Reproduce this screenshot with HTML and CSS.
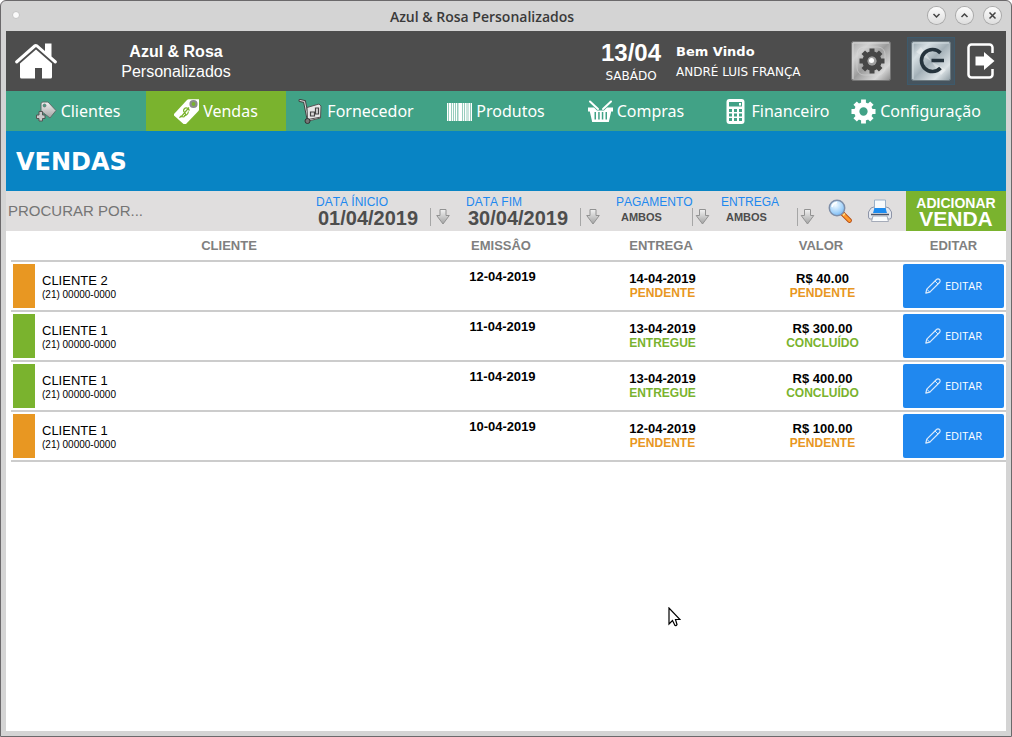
FILE: index.html
```html
<!DOCTYPE html>
<html lang="pt-BR">
<head>
<meta charset="utf-8">
<title>Azul &amp; Rosa Personalizados</title>
<link rel="stylesheet" href="styles.css">
</head>
<body>
<svg class="defs" aria-hidden="true">
  <defs>
    <linearGradient id="silver" x1="0" y1="0" x2="0" y2="1"><stop offset="0" stop-color="#f2f2f2"/><stop offset="1" stop-color="#a2a2a2"/></linearGradient>
    <linearGradient id="metal" x1="0" y1="0" x2="1" y2="1"><stop offset="0" stop-color="#a8a8a8"/><stop offset=".25" stop-color="#d2d2d2"/><stop offset=".5" stop-color="#9c9c9c"/><stop offset=".78" stop-color="#d8d8d8"/><stop offset="1" stop-color="#8a8a8a"/></linearGradient>
    <linearGradient id="steel" x1="0" y1="0" x2="1" y2="1"><stop offset="0" stop-color="#8fa0a8"/><stop offset=".25" stop-color="#d6dfe3"/><stop offset=".5" stop-color="#a3b0b7"/><stop offset=".78" stop-color="#dce3e6"/><stop offset="1" stop-color="#8d9ba2"/></linearGradient>
    <radialGradient id="glass" cx=".4" cy=".3" r=".8"><stop offset="0" stop-color="#f4fbff"/><stop offset=".6" stop-color="#a5d3fa"/><stop offset="1" stop-color="#68aef0"/></radialGradient>
    <symbol id="down" viewBox="0 0 14 16"><path d="M4 .5h6v6h3.300L7 15 .7 6.500H4z" fill="url(#silver)" stroke="#929292"/></symbol>
    <symbol id="gear" viewBox="-13 -13 26 26"><g fill="none" stroke="currentColor"><circle r="7" stroke-width="5.400"/><path stroke-width="5" stroke-linecap="butt" d="M0-8v-4.500M0 8v4.500M-8 0h-4.500M8 0h4.500M5.700 5.700l3 3M-5.700-5.700l-3-3M5.700-5.700l3-3M-5.700 5.700l-3 3"/></g></symbol>
    <symbol id="pencil" viewBox="0 0 16 16"><g fill="none" stroke="#d9e9fb" stroke-linejoin="round"><path stroke-width="1.200" d="M.8 15.200l1-4L11.500 1.500a1.800 1.800 0 0 1 3 3L4.800 14.200z"/><path d="M10 3l3 3M1.800 11.200l3 3"/></g></symbol>
  </defs>
</svg>
<div class="window">
  <div class="titlebar">
    <span class="dot"></span>
    <span class="caption">Azul &amp; Rosa Personalizados</span>
    <div class="controls">
      <button type="button" aria-label="Minimizar"><svg viewBox="0 0 17 17"><path d="M5.500 7l3 3 3-3"/></svg></button>
      <button type="button" aria-label="Maximizar"><svg viewBox="0 0 17 17"><path d="M5.500 10l3-3 3 3"/></svg></button>
      <button type="button" aria-label="Fechar"><svg viewBox="0 0 17 17"><path d="M5.500 5.500l6 6M11.500 5.500l-6 6"/></svg></button>
    </div>
  </div>
  <div class="app">
    <header class="header">
      <button type="button" class="plain" aria-label="Início">
        <svg width="44" height="38" viewBox="0 0 44 38" fill="#fff"><path d="M6 21.500L22 7.500l16 14V35a1.500 1.500 0 0 1-1.500 1.500H28V26h-7v10.500H7.500A1.500 1.500 0 0 1 6 35z"/><path d="M23.500 2.500L31 9V1.500h6.500v13l5.200 4.600c.8 1.500-.8 3-2.200 2.100L22 5 3.500 21.200c-1.500.9-3-.7-2.200-2.100L20 2.500q1.800-1.200 3.500 0z"/></svg>
      </button>
      <div class="brand"><strong>Azul &amp; Rosa</strong><span>Personalizados</span></div>
      <div class="today"><strong>13/04</strong><span>SABÁDO</span></div>
      <div class="user"><strong>Bem Vindo</strong><span>ANDRÉ LUIS FRANÇA</span></div>
      <button type="button" class="plain" aria-label="Ajustes">
        <svg width="40" height="40" viewBox="0 0 40 40"><rect x=".5" y=".5" width="39" height="39" rx="2" fill="url(#metal)" stroke="#747474"/><path d="M2 38V2h36" fill="none" stroke="#d6d6d6"/><rect x="6" y="6" width="28" height="28" rx="7" fill="none" stroke="#ddd" opacity=".5"/><use href="#gear" x="8" y="7" width="26" height="26" color="#474747"/><circle cx="21" cy="20" r="4.500" fill="#a0a0a0"/><circle cx="20.500" cy="19.500" r="2.500" fill="#fff"/></svg>
      </button>
      <button type="button" class="plain power" aria-label="Trocar usuário">
        <svg width="40" height="40" viewBox="0 0 40 40"><rect x=".5" y=".5" width="39" height="39" rx="2" fill="url(#steel)" stroke="#6d7a80"/><path d="M2 38V2h36" fill="none" stroke="#d4dee2"/><path d="M20 20L5 11l5-5zM20 20l15 9-5 5z" fill="#fff" opacity=".35"/><path d="M29.500 12a11 11 0 1 0 0 15M20.500 19.500H33" fill="none" stroke="#25333c" stroke-width="3.600"/></svg>
      </button>
      <button type="button" class="plain" aria-label="Sair">
        <svg width="28" height="36" viewBox="0 0 28 36"><path d="M25.500 10V4.500a3 3 0 0 0-3-3h-18a3 3 0 0 0-3 3v27a3 3 0 0 0 3 3h18a3 3 0 0 0 3-3V26" fill="none" stroke="#fff" stroke-width="2.500"/><path d="M8.500 13.500H17V9l10.500 9L17 27v-4.500H8.500z" fill="#fff"/></svg>
      </button>
    </header>
    <nav class="menu">
      <a href="#clientes"><svg viewBox="0 0 25 25"><path d="M9 5q0-2 2-2h5l8 8.500-6 7.500L9 12z" fill="url(#silver)" stroke="#5d6f6a"/><circle cx="12.500" cy="6.500" r="1.500" fill="#41a286" stroke="#666" stroke-width=".7"/><path d="M7 12.500h3.500V16H13v3.500h-2.500V22H7v-2.500H4.500V16H7z" fill="#c9c9c9" stroke="#555"/></svg>Clientes</a>
      <a href="#vendas" class="active" aria-current="page"><svg viewBox="0 0 25 25"><path d="M0 15L13 1q.7-.7 1.700-.7H25v10q0 1-.6 1.700L12 25H9.500L0 16.500z" fill="#fff"/><circle cx="19.500" cy="5" r="3" fill="#7ab32e" stroke="#8c8c8c" stroke-width="2.200"/><path d="M14 9.500c-3-2-6 2-3.500 4s0 6-3.500 3.500M15.500 11.500L13.800 9.500M7 17l-1.500 1.800M15 8.500l-8 9.500M14.500 12.500c-.6 3-3 4.500-4.500 4" fill="none" stroke="#7ab32e" stroke-width="1.200"/></svg>Vendas</a>
      <a href="#fornecedor"><svg viewBox="0 0 25 25"><path d="M2 1.500l4.500 1L10 20" fill="none" stroke="#454545" stroke-width="3" stroke-linecap="round"/><path d="M2 1.500l4.500 1L10 20" fill="none" stroke="#ddd" stroke-linecap="round"/><path d="M9 8.500L21 5l2 2-.5 12-12 3-1-2z" fill="#e8e8e8" stroke="#555"/><path d="M12.500 13h4v4h-4zM17.500 9h3v6h-3z" fill="#d8d8d8" stroke="#444" stroke-width="1.200"/><path d="M10 20.500l13-2.500" stroke="#555"/><circle cx="9.500" cy="22" r="2.500" fill="#777" stroke="#333"/></svg>Fornecedor</a>
      <a href="#produtos"><svg viewBox="0 0 25 25" fill="#fff"><path d="M0 4h1v18H0zM2 4h2v18H2zM5 4h1v18H5zM7 4h1v18H7zM9 4h1v18H9zM11.500 4h3.500v18h-3.500zM16 4h1v18h-1zM18 4h1.500v18H18zM20.500 4h1v18h-1zM22 4h1v18h-1zM24 4h1v18h-1z"/><path opacity=".45" d="M0 4h25v18H0z"/></svg>Produtos</a>
      <a href="#compras"><svg viewBox="0 0 25 25"><path d="M2 2.500l8 7.500M23 2.500L15 10" stroke="#fff" stroke-width="2" stroke-linecap="round"/><path fill="#fff" fill-rule="evenodd" d="M0 8.500h6l3 3h7l3-3h6v4h-1.800l-2.400 10.500H4.200L1.800 12.500H0zM6.500 13v7.500H8V13zM10.200 13v7.500h1.500V13zM13.800 13v7.500h1.500V13zM17.500 13v7.500H19V13z"/></svg>Compras</a>
      <a href="#financeiro"><svg viewBox="0 0 25 25"><rect x="3.500" width="18" height="25" rx="3" fill="#fff"/><path d="M6 3h13v4.500H6zM6 10h3v3H6zM11 10h3v3h-3zM16 10h3v3h-3zM6 14.500h3v3H6zM11 14.500h3v3h-3zM16 14.500h3v3h-3zM6 19h3v3H6zM11 19h3v3h-3zM16 19h3v3h-3z" fill="#41a286"/><path d="M16 4h2v2.500h-2z" fill="#fff"/></svg>Financeiro</a>
      <a href="#configuracao"><svg><use href="#gear"/></svg>Configuração</a>
    </nav>
    <h1 class="heading">VENDAS</h1>
    <form class="filters">
      <input class="search" type="text" placeholder="PROCURAR POR..." aria-label="Procurar por">
      <div class="field date"><label for="inicio">DATA ÍNICIO</label><input id="inicio" type="text" value="01/04/2019"><svg class="arrow"><use href="#down"/></svg></div>
      <div class="field date"><label for="fim">DATA FIM</label><input id="fim" type="text" value="30/04/2019"><svg class="arrow"><use href="#down"/></svg></div>
      <div class="field choice"><label for="pagamento">PAGAMENTO</label><select id="pagamento"><option>AMBOS</option></select><svg class="arrow"><use href="#down"/></svg></div>
      <div class="field choice"><label for="entrega">ENTREGA</label><select id="entrega"><option>AMBOS</option></select><svg class="arrow"><use href="#down"/></svg></div>
      <button type="button" class="plain tool" aria-label="Pesquisar"><svg width="24" height="24" viewBox="0 0 24 24"><path d="M14.500 14.500l7 7" stroke="#b4480f" stroke-width="4.600" stroke-linecap="round"/><path d="M15.500 15.500l6 6" stroke="#ff9a2e" stroke-width="3" stroke-linecap="round"/><path d="M15 16.500l2-2" stroke="#ffe08a" stroke-width="1.500"/><circle cx="9" cy="9" r="7.700" fill="url(#glass)" stroke="#7e8ea8" stroke-width="1.500"/><path d="M4 8q1-4 5-4.500" fill="none" stroke="#fff" stroke-width="1.500"/></svg></button>
      <button type="button" class="plain tool" aria-label="Imprimir"><svg width="24" height="24" viewBox="0 0 24 24"><path d="M3 9l3-1h12l3 1 2.500 4v5q0 2-2 2h-19q-2 0-2-2v-5z" fill="#e4e7ee" stroke="#8e95a8"/><path d="M6.500 1h11v10h-11z" fill="#f8fafc" stroke="#9ab0c8"/><path d="M6.500 9h11l1.500 5H5z" fill="#1d8cf0"/><path d="M3 15.500h18" stroke="#4c5365" stroke-width="1.500"/><path d="M5 17h14l1.500 5.500h-17z" fill="#fafbfc" stroke="#a5abb8"/></svg></button>
      <button type="button" class="add"><span>ADICIONAR</span><strong>VENDA</strong></button>
    </form>
    <main>
      <table class="sales">
        <thead><tr><th class="client">CLIENTE</th><th>EMISSÂO</th><th>ENTREGA</th><th>VALOR</th><th class="actions">EDITAR</th></tr></thead>
        <tbody>
          <tr class="pending"><td class="client"><div><b>CLIENTE 2</b><small>(21) 00000-0000</small></div></td><td class="info issued">12-04-2019</td><td class="info">14-04-2019<em>PENDENTE</em></td><td class="info">R$ 40.00<em>PENDENTE</em></td><td class="actions"><button type="button"><svg><use href="#pencil"/></svg>EDITAR</button></td></tr>
          <tr class="done"><td class="client"><div><b>CLIENTE 1</b><small>(21) 00000-0000</small></div></td><td class="info issued">11-04-2019</td><td class="info">13-04-2019<em>ENTREGUE</em></td><td class="info">R$ 300.00<em>CONCLUÍDO</em></td><td class="actions"><button type="button"><svg><use href="#pencil"/></svg>EDITAR</button></td></tr>
          <tr class="done"><td class="client"><div><b>CLIENTE 1</b><small>(21) 00000-0000</small></div></td><td class="info issued">11-04-2019</td><td class="info">13-04-2019<em>ENTREGUE</em></td><td class="info">R$ 400.00<em>CONCLUÍDO</em></td><td class="actions"><button type="button"><svg><use href="#pencil"/></svg>EDITAR</button></td></tr>
          <tr class="pending"><td class="client"><div><b>CLIENTE 1</b><small>(21) 00000-0000</small></div></td><td class="info issued">10-04-2019</td><td class="info">12-04-2019<em>PENDENTE</em></td><td class="info">R$ 100.00<em>PENDENTE</em></td><td class="actions"><button type="button"><svg><use href="#pencil"/></svg>EDITAR</button></td></tr>
        </tbody>
      </table>
    </main>
  </div>
  <svg class="cursor" viewBox="0 0 13 20" aria-hidden="true"><path d="M1 1v16l3.500-3.500L7 18.500q1.500.5 2-1L7.500 12.500H12z" fill="#fff" stroke="#000" stroke-width="1.200"/></svg>
</div>
</body>
</html>
```
FILE: styles.css
```css
* { box-sizing: border-box; }

body {
  margin: 0;
  background: #fff;
  font-family: "Liberation Sans", Arial, sans-serif;
}

button, input, select { font: inherit; color: inherit; border: 0; padding: 0; margin: 0; background: none; }
svg { display: block; flex: none; }
.defs { position: absolute; width: 0; height: 0; }

.window {
  position: relative;
  display: flex;
  flex-direction: column;
  min-height: 100vh;
  padding: 0 5px 5px;
  border: 1px solid #6b696b;
  border-radius: 6px 6px 0 0;
  background: #d4d4d4;
}

.titlebar {
  display: grid;
  grid-template-columns: 80px 1fr 128px;
  align-items: center;
  height: 30px;
  padding-bottom: 2px;
}
.dot { width: 8px; height: 8px; margin-left: 6px; border-radius: 50%; background: #fafafa; border: 1px solid #c4c4c4; }
.caption { padding-top: 4px; text-align: center; font: 600 14px/20px "Open Sans", sans-serif; color: #3a3a3a; }
.controls { display: flex; justify-content: flex-end; gap: 11px; padding-right: 5px; }
.controls button { width: 17px; height: 17px; border-radius: 50%; background: linear-gradient(#fcfcfc, #dedede); box-shadow: 0 0 0 1px #a9a9a9; }
.controls path { fill: none; stroke: #444; stroke-width: 1.5; }

.app { flex: 1; background: #fff; }

.header {
  display: grid;
  grid-template-columns: 60px 220px 1fr 80px 170px 60px 60px 40px;
  align-items: center;
  height: 60px;
  padding-right: 5px;
  background: #4d4d4d;
  color: #fff;
}
.plain { display: grid; place-items: center; }
.brand, .today, .user { display: flex; flex-direction: column; }
.brand { padding-top: 2px; text-align: center; font-size: 16px; line-height: 20px; }
.today { grid-column: 4; padding-top: 2px; text-align: center; font: 12px/18px "DejaVu Sans", sans-serif; }
.today strong { font: bold 24px/28px "Liberation Sans", sans-serif; }
.user { padding: 2px 0 0 5px; font: 12px/20px "DejaVu Sans", sans-serif; }
.user strong { font-size: 13px; }
.power { width: 48px; height: 48px; justify-self: center; background: #46545e; border: 1px solid #3d5a6c; }

.menu { display: flex; background: #41a286; }
.menu a {
  display: flex;
  align-items: center;
  justify-content: center;
  gap: 4px;
  width: 14%;
  height: 40px;
  color: #fff;
  font: 16px/24px "Noto Sans", sans-serif;
  text-decoration: none;
}
.menu svg { width: 25px; height: 25px; }
.menu .active { background: #7ab32e; }

.heading {
  margin: 0;
  padding: 2px 10px 0;
  background: #0884c4;
  color: #fff;
  font: bold 24px/58px "DejaVu Sans", sans-serif;
}

.filters {
  display: grid;
  grid-template-columns: 1fr 150px 150px 105px 105px 40px 40px 100px;
  height: 40px;
  background: #e0dede;
}
.search { min-width: 0; padding: 0 2px 2px; font-size: 15px; }
.search::placeholder { color: #757575; opacity: 1; }
.field {
  display: grid;
  grid-template-rows: 12px 20px;
  align-content: start;
  padding-top: 5px;
  color: #4d4d4d;
}
.field label { grid-column: 1 / 3; color: #2088ef; font-size: 12px; line-height: 12px; font-kerning: none; }
.field select { appearance: none; min-width: 0; height: 18px; padding-left: 5px; font-size: 11px; font-weight: bold; }
.date input { min-width: 0; height: 20px; padding-left: 2px; font-size: 20px; font-weight: bold; }
.date { grid-template-columns: 1fr 36px; }
.choice { grid-template-columns: 1fr 29px; }
.arrow { width: 20px; height: 18px; padding: 1px 0 1px 5px; border-left: 1px solid #a6a6a6; }
.choice .arrow { width: 18px; padding-left: 2px; }
.tool { justify-items: start; padding-left: 2px; }
.add { background: #7ab32e; color: #fff; display: flex; flex-direction: column; align-items: center; justify-content: center; }
.add span { font-size: 14px; font-weight: bold; line-height: 15px; }
.add strong { font-size: 21px; line-height: 15px; }

main { padding-left: 5px; }
.sales { width: 100%; table-layout: fixed; border-collapse: separate; border-spacing: 0; text-align: center; font-size: 13px; font-weight: bold; line-height: 15px; }
.sales th, .sales td { padding: 0; border-bottom: 2px solid #ccc; }
.sales th { width: 160px; height: 31px; color: #808080; }
.sales th.client { width: auto; padding-left: 26px; }
.sales th.actions { width: 105px; }
.sales td { height: 50px; }
.sales td.info { padding: 0 0 2px 3px; }
.sales td.issued { padding-bottom: 20px; }
.sales em { display: block; font-size: 12px; font-style: normal; line-height: 14px; }
.pending em { color: #e89722; }
.done em { color: #7ab32e; }
td.client > div { display: flex; flex-direction: column; justify-content: center; height: 44px; margin-left: 2px; padding: 2px 0 0 7px; border-left: 22px solid; text-align: left; font-weight: normal; }
.pending .client > div { border-color: #e89722; }
.done .client > div { border-color: #7ab32e; }
.client b { color: #000; font-weight: normal; }
.client small { font-size: 10px; line-height: 13px; }
.actions button {
  display: flex;
  align-items: center;
  justify-content: center;
  gap: 4px;
  width: calc(100% - 4px);
  height: 44px;
  margin: 0 2px;
  border-radius: 2px;
  background: #2088ef;
  color: #fff;
  font: 11px/16px "Open Sans", sans-serif;
}
.actions svg { width: 16px; height: 16px; }

.cursor { position: absolute; left: 667px; top: 606px; width: 13px; height: 20px; }
```
